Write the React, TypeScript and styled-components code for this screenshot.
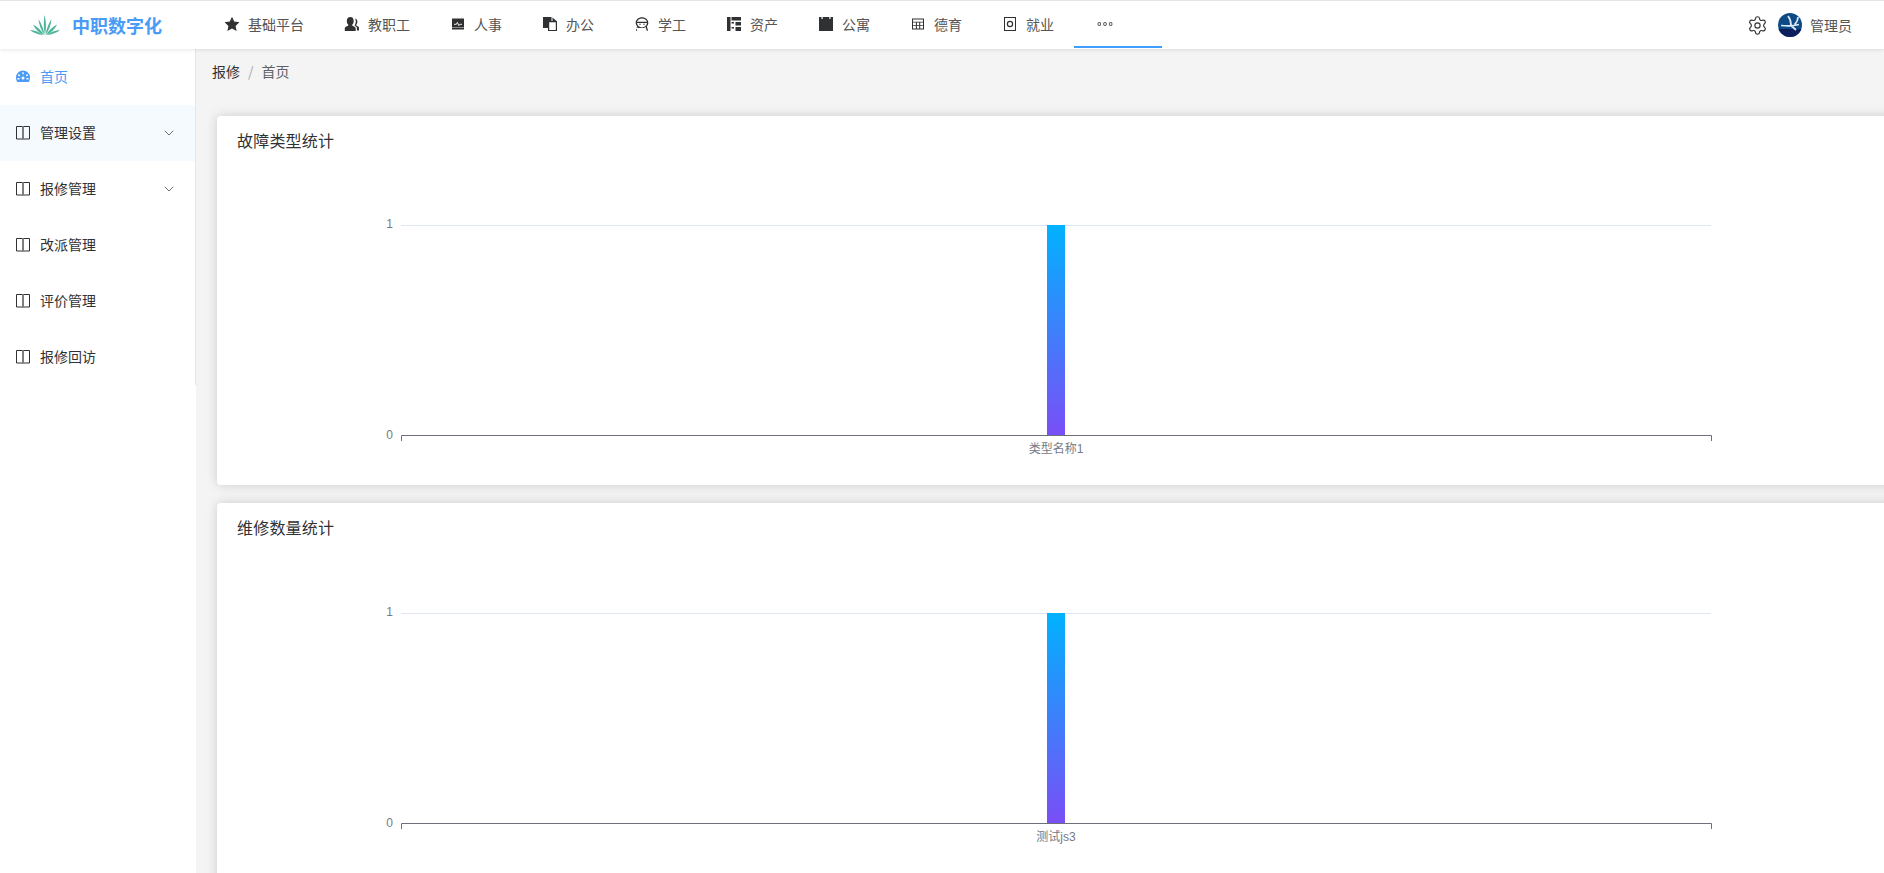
import React from "react";
import styled, { createGlobalStyle } from "styled-components";
import { Settings, ChevronDown } from "lucide-react";

const Global = createGlobalStyle`
  html, body { margin: 0; padding: 0; height: 100%; background: #fff; overflow: hidden; }
  body { font-family: "Microsoft YaHei", "Noto Sans CJK SC", "Liberation Sans", sans-serif; }
  #root { height: 100%; }
`;

const Page = styled.div`
  display: flex;
  flex-direction: column;
  width: 1884px;
  height: 873px;
  overflow: hidden;
  border-top: 1px solid #e4e4e4;
  box-sizing: border-box;
`;

const Header = styled.header`
  display: flex;
  align-items: stretch;
  flex: 0 0 48px;
  background: #fff;
  box-shadow: 0 1px 4px rgba(0, 0, 0, 0.1);
  position: relative;
  z-index: 2;
`;

const Brand = styled.div`
  display: flex;
  align-items: center;
  gap: 12px;
  width: 204px;
  box-sizing: border-box;
  padding-left: 30px;
`;

const BrandName = styled.span`
  font-size: 18px;
  font-weight: 700;
  color: #4a9bf6;
  white-space: nowrap;
`;

const Nav = styled.nav`
  display: flex;
  align-items: stretch;
`;

const NavItem = styled.div<{ $active?: boolean }>`
  display: flex;
  align-items: center;
  gap: 8px;
  padding: 0 20px;
  font-size: 14px;
  color: #555;
  white-space: nowrap;
  border-bottom: 2px solid ${(p) => (p.$active ? "#409eff" : "transparent")};
  margin-bottom: 1px;
  min-width: ${(p) => (p.$active ? "48px" : "auto")};
`;

const NavIcon = styled.svg`
  width: 16px;
  height: 16px;
  flex: none;
  fill: #303133;
`;

const MoreIcon = styled(NavIcon)`
  margin-left: 3px;
`;

const UserArea = styled.div`
  display: flex;
  align-items: center;
  margin-left: auto;
  padding-right: 32px;
  color: #303133;
`;

const Avatar = styled.svg`
  width: 24px;
  height: 24px;
  margin: 0 8px 0 10px;
`;

const UserName = styled.span`
  font-size: 14px;
  color: #555;
`;

const Body = styled.div`
  display: flex;
  flex: 1;
  min-height: 0;
`;

const Sidebar = styled.aside`
  flex: 0 0 196px;
  background: #fff;
`;

const Menu = styled.ul`
  list-style: none;
  margin: 0;
  padding: 0;
  border-right: 1px solid #e6e6e6;
`;

const MenuRow = styled.li<{ $active?: boolean; $hover?: boolean }>`
  display: flex;
  align-items: center;
  gap: 10px;
  height: 56px;
  padding: 0 18px 0 16px;
  font-size: 14px;
  color: ${(p) => (p.$active ? "#4a9bf6" : "#303133")};
  background: ${(p) => (p.$hover ? "#f5faff" : "#fff")};
`;

const MenuLabel = styled.span`
  flex: 1;
  position: relative;
  top: -1px;
`;

const MenuIcon = styled.svg`
  width: 14px;
  height: 14px;
  flex: none;
`;

const Main = styled.main`
  flex: 1;
  min-width: 0;
  background: #f4f4f4;
  overflow: hidden;
  padding-left: 21px;
`;

const Crumbs = styled.div`
  display: flex;
  align-items: center;
  height: 22px;
  margin-left: -5px;
  padding-top: 11px;
  padding-bottom: 34px;
  font-size: 14px;
  color: #606266;
`;

const CrumbRoot = styled.span`
  color: #303133;
`;

const CrumbSep = styled.span`
  margin: 0 8px;
  color: #a8abb2;
`;

const ChartSvg = styled.svg`
  display: block;
  width: 1700px;
  height: 320px;
`;

const Card = styled.section`
  width: 1700px;
  height: 369px;
  margin-bottom: 18px;
  background: #fff;
  border-radius: 4px;
  box-shadow: 0 0 12px rgba(0, 0, 30, 0.16);

  &:last-child {
    height: 400px;
  }

  &:last-child ${ChartSvg} {
    margin-top: 1px;
  }
`;

const CardTitle = styled.h2`
  margin: 0;
  height: 49px;
  padding-left: 20px;
  font-size: 16px;
  font-weight: 400;
  letter-spacing: 0.2px;
  line-height: 49px;
  color: #303133;
`;

const AxisText = styled.text`
  font-family: "Liberation Sans", "Noto Sans CJK SC", sans-serif;
  font-size: 12px;
  fill: #777a82;
`;

const Chart: React.FC<{ id: string; label: string }> = ({ id, label }) => (
  <ChartSvg viewBox="0 0 1700 320">
    <defs>
      <linearGradient id={id} x1="0" y1="0" x2="0" y2="1">
        <stop offset="0" stopColor="#00b2ff" />
        <stop offset="1" stopColor="#7a4ef6" />
      </linearGradient>
    </defs>
    <line x1="184" x2="1494" y1="60.5" y2="60.5" stroke="#e0e6f1" />
    <rect x="830" y="60" width="18" height="210" fill={`url(#${id})`} />
    <path d="M184.5 276V270.5H1494.5V276" fill="none" stroke="#6e7079" />
    <AxisText x="176" y="63" textAnchor="end">1</AxisText>
    <AxisText x="176" y="274" textAnchor="end">0</AxisText>
    <AxisText x="839" y="288" textAnchor="middle">{label}</AxisText>
  </ChartSvg>
);

const icons: Record<string, React.ReactNode> = {
  star: <path d="M8 .8l2.200 4.800 5.200.7-3.800 3.600 1 5.200L8 12.500l-4.600 2.600 1-5.200L.6 6.300l5.200-.7z" />,
  users: (
    <>
      <path d="M6.300 1c2.100 0 3.400 1.700 3.400 3.900 0 1.600-.6 2.900-1.400 3.700v1.100c1.800.6 3.400 1.400 3.400 2.500V15H.800v-2.800c0-1.100 1.600-1.900 3.400-2.500V8.600C3.400 7.800 2.800 6.500 2.800 4.900 2.800 2.700 4.200 1 6.300 1z" />
      <path d="M10.800 2.500c1.600.2 2.600 1.600 2.600 3.200 0 1.300-.5 2.400-1.200 3v.9c1.400.5 2.800 1.200 2.800 2.200V14.500h-2.100v-2.200c0-1.200-1.100-2.100-2.500-2.700.9-1.100 1.400-2.700 1.400-4.300 0-.9-.3-2-.9-2.800z" />
    </>
  ),
  hr: (
    <>
      <path d="M2 2.500h12v11H2z" />
      <path d="M4 8.300h2.400l1-2 1.400 3.400 1-1.400H12" fill="none" stroke="#fff" strokeWidth="0.9" />
      <path d="M2 11.500h12" stroke="#999" strokeWidth="0.9" />
    </>
  ),
  office: (
    <path fillRule="evenodd" d="M1 1h8.500v4H15v10H6V12H1zM10.500 1.500L14.500 5h-4zM7.200 6.200v7.700h6.600V6.200z" />
  ),
  student: (
    <>
      <path
        fillRule="evenodd"
        d="M8 1.200c3.500 0 6.300 2.400 6.300 5.500 0 1.400-.5 2.600-1.500 3.500l1.300 4.600h-1.300l-1.200-3.900c-1 .8-2.300 1.200-4.600 1.200s-3.600-.4-4.600-1.200L3.200 14.800H1.900l1.300-4.600c-1-.9-1.500-2.100-1.500-3.500 0-3.100 2.800-5.500 6.300-5.500zM3 5.800h10C12.500 3.800 10.500 2.400 8 2.400S3.500 3.800 3 5.800zM3 7c.3 2.600 2.400 4.400 5 4.400s4.700-1.800 5-4.400z"
      />
      <circle cx="6" cy="8.200" r="0.7" />
      <circle cx="10" cy="8.200" r="0.7" />
    </>
  ),
  asset: (
    <path d="M1 1h3.500v14H1zM5.500 1H15v3.500H5.500zM5.500 6H8v1.500H5.500zM9.500 6H15v3.500H9.500zM5.500 11H8v1.500H5.500zM9.500 11H15V15H9.500z" />
  ),
  dorm: <path d="M1 1h2.500v2h1.200V1h6.600v2h1.200V1H15v14H1z" />,
  moral: (
    <path
      fillRule="evenodd"
      d="M2 2.500h12v11H2zM3 3.500v2.200h10V3.500zM3 6.600v2.600h2.900V6.600zM6.900 6.600v2.600h2.300V6.600zM10.200 6.600v2.600H13V6.600zM3 10.100v2.400h2.900v-2.400zM6.900 10.100v2.400h2.300v-2.400zM10.200 10.100v2.400H13v-2.400z"
    />
  ),
  job: (
    <path
      fillRule="evenodd"
      d="M2 1h12v14H2zM3 2v12h10V2zM8 4.800a3.200 3.200 0 110 6.400 3.200 3.200 0 010-6.400zM8 6a2 2 0 100 4 2 2 0 000-4z"
    />
  ),
  more: (
    <path
      fillRule="evenodd"
      fill="#555"
      d="M2.500 6a2 2 0 110 4 2 2 0 010-4zm0 1a1 1 0 100 2 1 1 0 000-2zM8.500 6a2 2 0 110 4 2 2 0 010-4zm0 1a1 1 0 100 2 1 1 0 000-2zM14.500 6a2 2 0 110 4 2 2 0 010-4zm0 1a1 1 0 100 2 1 1 0 000-2z"
    />
  ),
};

const navItems = [
  { icon: "star", label: "基础平台" },
  { icon: "users", label: "教职工" },
  { icon: "hr", label: "人事" },
  { icon: "office", label: "办公" },
  { icon: "student", label: "学工" },
  { icon: "asset", label: "资产" },
  { icon: "dorm", label: "公寓" },
  { icon: "moral", label: "德育" },
  { icon: "job", label: "就业" },
];

const BookIcon = () => (
  <MenuIcon viewBox="0 0 14 14">
    <path d="M.5 .5h6.500v12.500H.5zM7 .5h6.500v12.500H7z" fill="none" stroke="#303133" />
    <path d="M7 0v14" stroke="#8a8a8a" strokeWidth="1.400" />
  </MenuIcon>
);

const DashIcon = () => (
  <MenuIcon viewBox="0 0 14 14">
    <path
      fillRule="evenodd"
      fill="#4a9bf6"
      d="M7 .5a7 7 0 017 7c0 1.700-.4 3.200-1.200 4.500H1.200A8 8 0 010 7.500a7 7 0 017-7zM6.300 2.200v2h1.400v-2zM2.800 4l-1 1 1.400 1.400 1-1zM11.200 4L9.800 5.400l1 1L12.200 5zM7 6.500a1.500 1.500 0 100 3 1.500 1.500 0 000-3zM1.500 8v1.400h2V8zM10.500 8v1.400h2V8z"
    />
  </MenuIcon>
);

const Arrow = styled(ChevronDown)`
  width: 16px;
  height: 16px;
  color: #4a4d55;
  flex: none;
`;

const menu = [
  { label: "管理设置", arrow: true, hover: true },
  { label: "报修管理", arrow: true },
  { label: "改派管理" },
  { label: "评价管理" },
  { label: "报修回访" },
];

export default function App() {
  return (
    <Page>
      <Global />
      <Header>
        <Brand>
          <svg width="30" height="20" viewBox="0 0 30 20">
            <g fill="#4fb59a">
              <path d="M15 20C13.500 13 13.500 6 14.500 0c1.700 6 2 13 .5 20z" />
              <path d="M14.500 20C11 15 9 10 8.500 4c2.800 4.500 5.200 10 6 16z" />
              <path d="M15.500 20c3.500-5 5.500-10 6-16-2.800 4.500-5.200 10-6 16z" />
              <path d="M14 20C9 18 5 14 3 9.500c4.500 2.500 8.500 6 11 10.500z" />
              <path d="M16 20c5-2 9-6 11-10.500-4.500 2.500-8.500 6-11 10.500z" />
              <path d="M13 20C8 19.500 3 17.800 0 15c5 .2 9.500 2 13 5z" />
              <path d="M17 20c5-.5 10-2.200 13-5-5 .2-9.500 2-13 5z" />
            </g>
          </svg>
          <BrandName>中职数字化</BrandName>
        </Brand>
        <Nav>
          {navItems.map((n) => (
            <NavItem key={n.label}>
              <NavIcon viewBox="0 0 16 16">{icons[n.icon]}</NavIcon>
              {n.label}
            </NavItem>
          ))}
          <NavItem $active>
            <MoreIcon viewBox="0 0 17 16">{icons.more}</MoreIcon>
          </NavItem>
        </Nav>
        <UserArea>
          <Settings size={21} strokeWidth={1.3} />
          <Avatar viewBox="0 0 24 24">
            <defs>
              <clipPath id="av">
                <circle cx="12" cy="12" r="12" />
              </clipPath>
            </defs>
            <g clipPath="url(#av)">
              <rect width="24" height="24" fill="#0d4a85" />
              <rect y="16" width="24" height="8" fill="#0a1f5c" />
              <path d="M3 12.500c5 .5 11 1 18-1M10 3c2 2.500 3 5.500 3 9M13 12.500l5 4.500M20 4c0 3-1.500 5.500-3.500 7.500" fill="none" stroke="#dbe8f5" strokeWidth="1.700" />
            </g>
          </Avatar>
          <UserName>管理员</UserName>
        </UserArea>
      </Header>
      <Body>
        <Sidebar>
          <Menu>
            <MenuRow $active>
              <DashIcon />
              <MenuLabel>首页</MenuLabel>
            </MenuRow>
            {menu.map((m) => (
              <MenuRow key={m.label} $hover={m.hover}>
                <BookIcon />
                <MenuLabel>{m.label}</MenuLabel>
                {m.arrow && <Arrow strokeWidth={1.2} />}
              </MenuRow>
            ))}
          </Menu>
        </Sidebar>
        <Main>
          <Crumbs>
            <CrumbRoot>报修</CrumbRoot>
            <CrumbSep>/</CrumbSep>
            <span>首页</span>
          </Crumbs>
          <Card>
            <CardTitle>故障类型统计</CardTitle>
            <Chart id="g1" label="类型名称1" />
          </Card>
          <Card>
            <CardTitle>维修数量统计</CardTitle>
            <Chart id="g2" label="测试js3" />
          </Card>
        </Main>
      </Body>
    </Page>
  );
}
